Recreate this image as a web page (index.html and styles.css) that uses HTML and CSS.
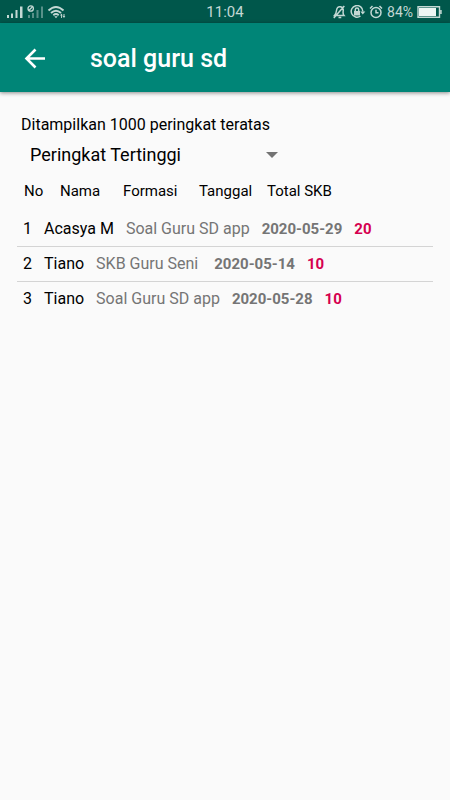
FILE: index.html
```html
<!DOCTYPE html>
<html lang="id">
<head>
<meta charset="utf-8">
<meta name="viewport" content="width=device-width, initial-scale=1">
<title>soal guru sd</title>
<link rel="stylesheet" href="styles.css">
</head>
<body>
<div class="status">
  <div class="status-side">
    <svg width="60" height="14" viewBox="0 0 60 14" aria-hidden="true">
      <g fill="#c3d8d4">
        <path d="M0 10h2v3H0zM4 8.500h2V13H4zM8.500 5h2v8h-2zM13 1.500h2.500V13H13z"/>
        <path d="M21 10h2v3h-2zM25 8h2v5h-2zM29.500 5h2v8h-2zM34 1.500h2V13h-2z" opacity=".45"/>
      </g>
      <g fill="none" stroke="#c3d8d4" stroke-width="1.300">
        <circle cx="23.700" cy="3.500" r="2.700"/>
        <path d="M22 5.200l3.500-3.500"/>
        <path d="M41.500 5.500Q49-1.500 56.500 5.500M44 8Q49 3.300 54 8M46.300 10.200Q49 8 51.700 10.200" stroke-width="1.900"/>
      </g>
      <path fill="#c3d8d4" d="M47.300 11.300h3.400L49 13.200zM53 10.500l1.500-2 1.200 2h-.8V13H54v-2.500zM56.500 9h1v2h.8L57 13l-1.500-2h1z"/>
    </svg>
  </div>
  <time class="clock">11:04</time>
  <div class="status-side status-right">
    <svg width="50" height="14" viewBox="0 0 50 14" fill="none" stroke="#c3d8d4" stroke-width="1.500" aria-hidden="true">
      <path d="M1.500 10.500h9.500c-1.300-1.500-1-3-.8-4.500.3-2.300-.7-3.800-2.700-4.200C5 1.300 3.800 3 3.500 5.500 3.200 8 2.700 9.300 1.500 10.500zM5.500 12.500h2.800M.8 13L11.300 1"/>
      <path d="M27.500 11A5.800 5.800 0 1 1 29.800 6.500"/>
      <path d="M27.300 6.500h5l-2.500 3z" fill="#c3d8d4" stroke="none"/>
      <path d="M21 6h6v4.500h-6z" fill="#c3d8d4" stroke="none"/>
      <path d="M22.300 6V4.800a1.700 1.700 0 0 1 3.400 0V6"/>
      <circle cx="43" cy="7.500" r="5"/>
      <path d="M43 4.700v3.100h2.500M37 3.500L39.500 1M49 3.500L46.500 1"/>
    </svg>
    <span class="charge">84%</span>
    <svg width="26" height="12" viewBox="0 0 26 12" aria-hidden="true">
      <path d="M1 .7h21.500v10.600H1zM24 4v4" fill="none" stroke="#c3d8d4" stroke-width="1.400"/>
      <path d="M2 2h17v8H2z" fill="#edf5f3"/>
    </svg>
  </div>
</div>
<header class="bar">
  <button class="back" type="button" aria-label="Kembali">
    <svg width="24" height="24" viewBox="0 0 24 24" aria-hidden="true"><path d="M22 11.500H4M12.500 2.500L3.500 11.500l9 9" fill="none" stroke="#fff" stroke-width="2.600"/></svg>
  </button>
  <h1 class="title">soal guru sd</h1>
</header>
<main class="content">
  <label class="caption" for="sort">Ditampilkan 1000 peringkat teratas</label>
  <div class="picker">
    <select id="sort" class="picker-select">
      <option>Peringkat Tertinggi</option>
    </select>
  </div>
  <table class="ranks">
    <thead>
      <tr><th class="no">No</th><th class="name">Nama</th><th class="form">Formasi</th><th class="date">Tanggal</th><th>Total SKB</th></tr>
    </thead>
    <tbody>
      <tr><td>1</td><td>Acasya M</td><td class="muted">Soal Guru SD app</td><td class="muted strong">2020-05-29</td><td class="score strong">20</td></tr>
      <tr><td>2</td><td>Tiano</td><td class="muted">SKB Guru Seni&nbsp;</td><td class="muted strong">2020-05-14</td><td class="score strong">10</td></tr>
      <tr><td>3</td><td>Tiano</td><td class="muted">Soal Guru SD app</td><td class="muted strong">2020-05-28</td><td class="score strong">10</td></tr>
    </tbody>
  </table>
</main>
</body>
</html>
```
FILE: styles.css
```css
* { box-sizing: border-box; }

body {
  margin: 0;
  min-height: 100vh;
  background: #fafafa;
  color: #000;
  font: 15px/20px Roboto, sans-serif;
}

.status {
  display: flex;
  align-items: center;
  height: 23px;
  padding: 0 7px;
  background: #00574b;
  color: #c3d8d4;
}

.status-side {
  display: flex;
  flex: 1;
  align-items: center;
}

.status-right {
  justify-content: flex-end;
  gap: 4px;
}

.charge { font-size: 14px; }

.bar {
  display: flex;
  align-items: center;
  height: 69px;
  padding: 2px 23px 0;
  gap: 43px;
  background: #008577;
  box-shadow: 0 1px 4px rgba(0, 0, 0, 0.45);
}

.back {
  display: flex;
  padding: 0;
  border: 0;
  background: none;
}

.title {
  margin: 0;
  color: #fff;
  font-size: 25px;
  font-weight: 500;
  line-height: 32px;
}

.content { padding: 23px 17px; }

.caption {
  display: block;
  padding-left: 4px;
  font-size: 16px;
}

.picker {
  display: flex;
  position: relative;
  width: 268px;
  max-width: 100%;
  height: 40px;
}

.picker::after {
  content: "";
  position: absolute;
  top: 17px;
  right: 7px;
  border: 6px solid transparent;
  border-top-color: #737373;
  border-bottom: 0;
  pointer-events: none;
}

.picker-select {
  width: 100%;
  padding: 0 13px;
  border: 0;
  appearance: none;
  background: none;
  color: #000;
  font: 18px/24px Roboto, sans-serif;
}

.ranks,
.ranks thead,
.ranks tbody { display: block; }

.ranks tr {
  display: flex;
  align-items: center;
}

.ranks thead tr {
  height: 32px;
  margin-bottom: 4px;
  padding-left: 7px;
}

.ranks tbody tr {
  height: 35px;
  padding-left: 6px;
  gap: 12px;
}

.ranks tbody tr + tr { border-top: 1px solid #d4d4d4; }

.ranks th,
.ranks td {
  padding: 0;
  font-weight: 400;
  text-align: left;
  white-space: nowrap;
}

.ranks td { font-size: 16px; }

.ranks .no { width: 36px; }
.ranks .name { width: 63px; }
.ranks .form { width: 76px; }
.ranks .date { width: 68px; }

.ranks .strong {
  font-size: 15px;
  font-weight: 700;
}

.muted { color: #757575; }
.score { color: #d5004f; }
```
